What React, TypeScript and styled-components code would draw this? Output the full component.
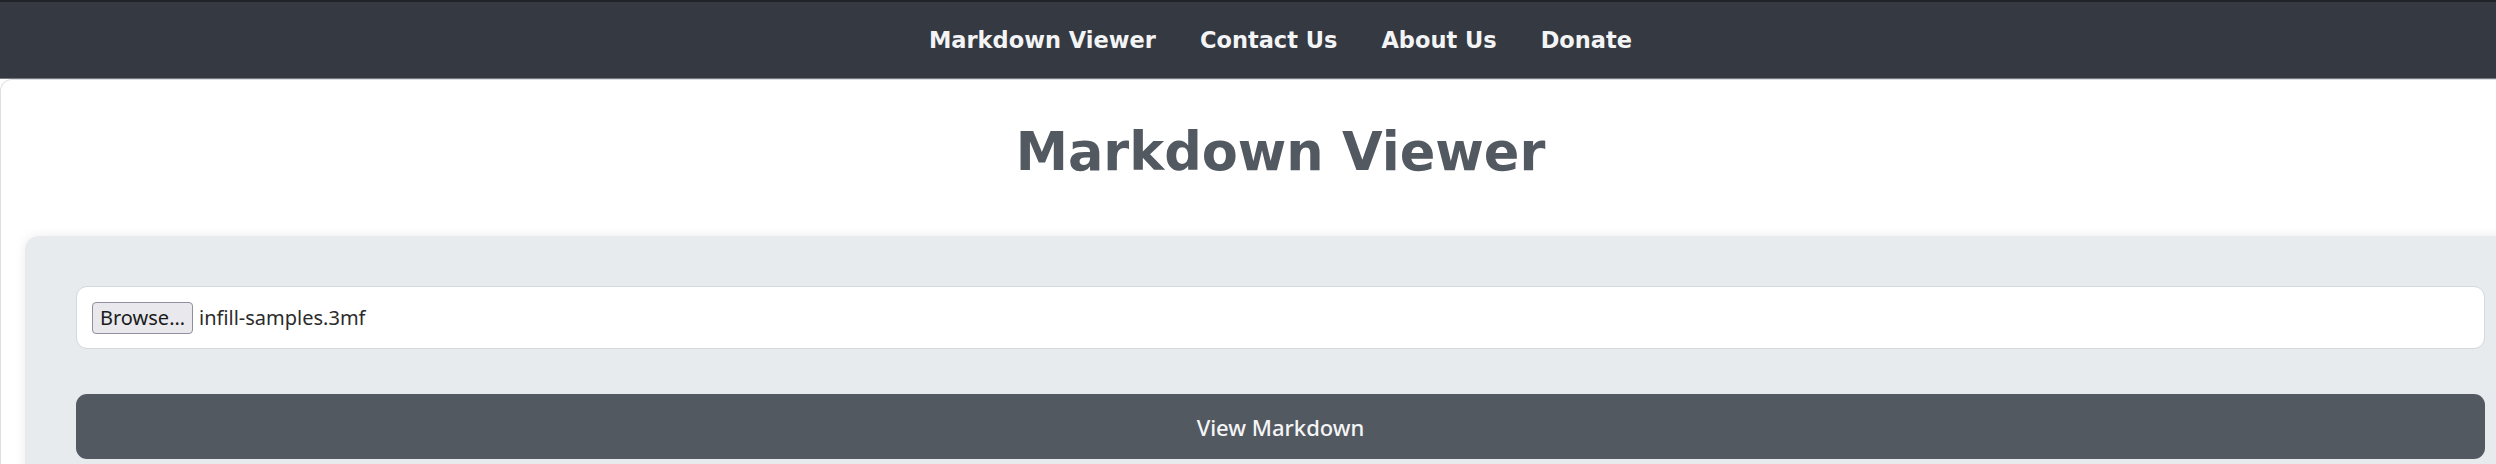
import React from 'react';
import styled, { createGlobalStyle } from 'styled-components';

const GlobalStyle = createGlobalStyle`
  html, body {
    margin: 0;
    padding: 0;
    background: #ffffff;
    overflow-x: hidden;
  }
`;

const Page = styled.div`
  width: 2561px;
  font-family: 'Noto Sans', 'Open Sans', sans-serif;
`;

const NavBar = styled.nav`
  height: 76px;
  background: #353941;
  border-top: 2px solid #202327;
  border-bottom: 1px solid #767a80;
  display: flex;
  align-items: center;
  justify-content: center;
  gap: 44px;
`;

const NavLink = styled.a`
  font-family: 'DejaVu Sans', sans-serif;
  font-weight: bold;
  font-size: 22.5px;
  color: #f3f4f5;
  text-decoration: none;
  cursor: pointer;
`;

const Main = styled.main`
  background: #ffffff;
  border: 1px solid #dcdfe3;
  border-bottom: none;
  border-radius: 12px 12px 0 0;
  padding: 0 24px 40px;
`;

const Title = styled.h1`
  margin: 40px 0 53px;
  text-align: center;
  font-family: 'DejaVu Sans', sans-serif;
  font-weight: bold;
  font-size: 52.5px;
  line-height: 1.2;
  color: #535961;
`;

const Card = styled.section`
  background: #e8ebee;
  border-radius: 14px;
  box-shadow: 0 0 12px rgba(0, 0, 0, 0.08);
  padding: 50px 51px 60px;
  display: flex;
  flex-direction: column;
  gap: 45px;
`;

const FileField = styled.div`
  height: 61px;
  background: #ffffff;
  border: 1px solid #d3d8df;
  border-radius: 11px;
  display: flex;
  align-items: center;
  padding: 0 15px;
`;

const BrowseButton = styled.button`
  height: 32px;
  padding: 0 7px;
  background: #e9e9ed;
  border: 1px solid #8f8f9d;
  border-radius: 4px;
  font-family: 'Noto Sans', sans-serif;
  font-size: 20px;
  color: #1b1b1b;
  cursor: pointer;
`;

const FileName = styled.span`
  margin-left: 6px;
  font-size: 20px;
  color: #2b2b2b;
`;

const SubmitButton = styled.button`
  height: 65px;
  width: 100%;
  background: #535961;
  border: none;
  border-radius: 11px;
  color: #f4f5f6;
  font-family: 'Noto Sans', sans-serif;
  font-weight: 500;
  font-size: 22px;
  cursor: pointer;
`;

const links = ['Markdown Viewer', 'Contact Us', 'About Us', 'Donate'];

export default function App() {
  return (
    <Page>
      <GlobalStyle />
      <NavBar>
        {links.map((l) => (
          <NavLink key={l}>{l}</NavLink>
        ))}
      </NavBar>
      <Main>
        <Title>Markdown Viewer</Title>
        <Card>
          <FileField>
            <BrowseButton type="button">Browse…</BrowseButton>
            <FileName>infill-samples.3mf</FileName>
          </FileField>
          <SubmitButton type="button">View Markdown</SubmitButton>
        </Card>
      </Main>
    </Page>
  );
}
